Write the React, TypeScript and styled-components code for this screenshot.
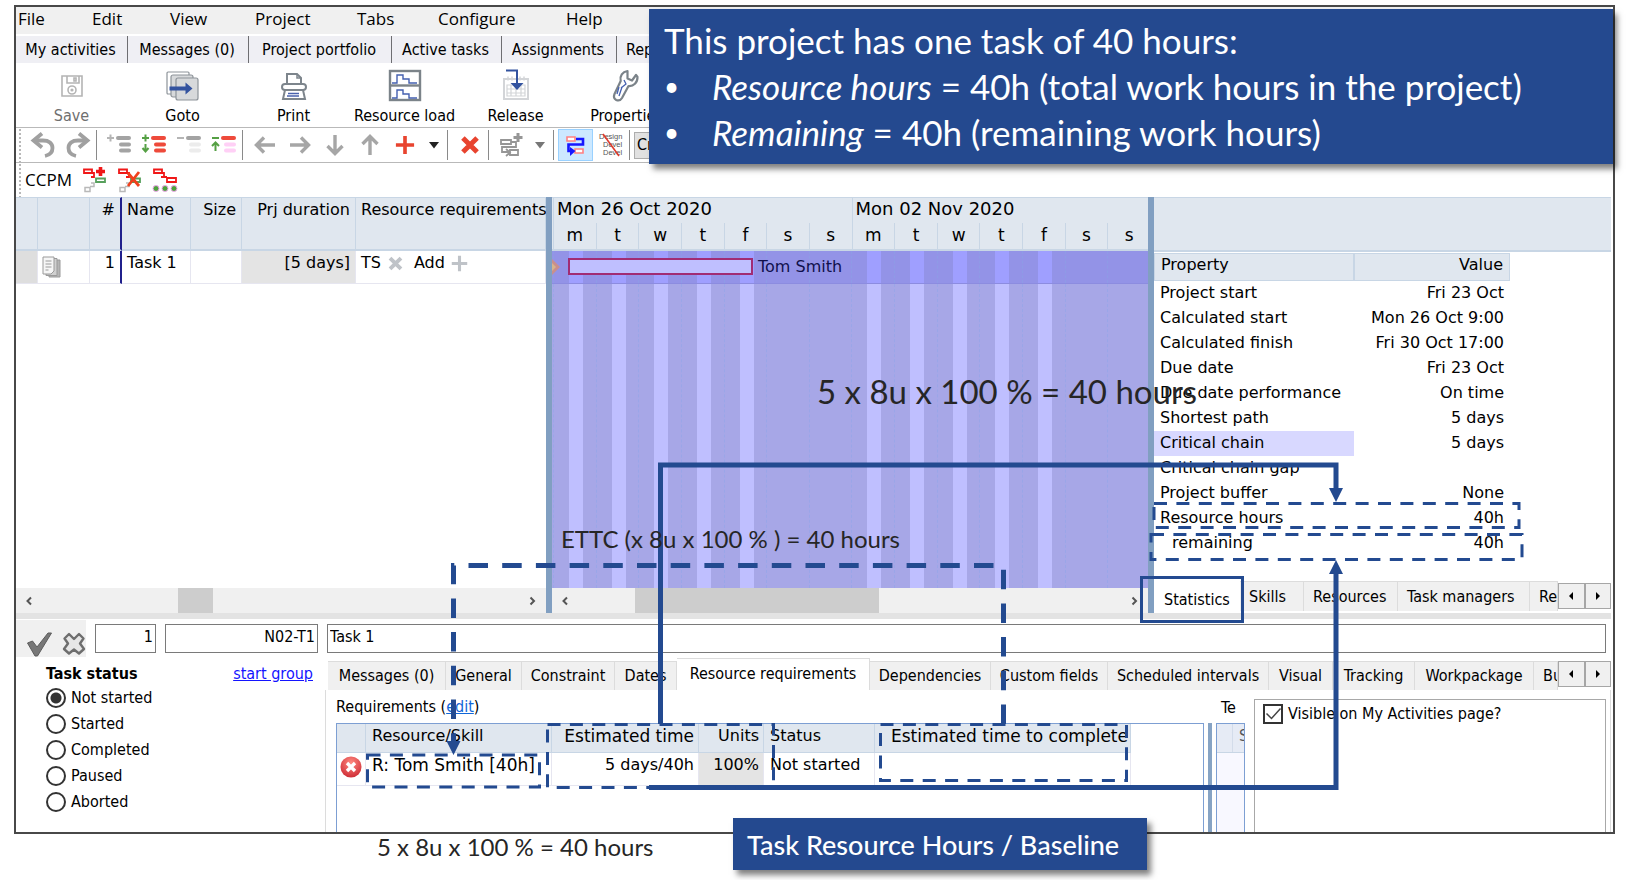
import React from "react";
import styled, { createGlobalStyle, css } from "styled-components";

const ui = `"DejaVu Sans Condensed", "Noto Sans", sans-serif`;
const wide = `"DejaVu Sans", sans-serif`;
const menuFont = `"Open Sans", "Noto Sans", sans-serif`;
const slide = `Lato, "Open Sans", sans-serif`;
const navy = "#234a90";
const headBg = "#e0e7ef";
const headLine = "#c8d6e5";

const Global = createGlobalStyle`
  *, *::before, *::after { box-sizing: border-box; }
  body { margin: 0; background: #fff; color: #000; font-family: ${ui}; font-size: 16px; line-height: 20px; }
  button, input, select { font: inherit; color: inherit; }
  button { padding: 0; border: 0; background: none; }
  table { border-collapse: separate; border-spacing: 0; table-layout: fixed; }
`;

const Stage = styled.div`
  position: relative;
  overflow: hidden;
  padding: 5px 37px 46px 14px;
`;

const Window = styled.main`
  border: 2px solid #484848;
  padding-right: 2px;
  overflow: hidden;
`;

const MenuBar = styled.nav`
  display: flex;
  height: 27px;
  background: #f0f0f0;
  font-family: ${menuFont};
  font-size: 17px;
`;
const MenuItem = styled.button<{ $w: number }>`
  flex: none;
  width: ${(p) => p.$w}px;
  padding: 0 0 4px 2px;
  text-align: left;
`;

const PageTabs = styled.nav`
  display: flex;
  height: 27px;
  margin-top: 2px;
  background: #efeff4;
`;
const PageTab = styled.button<{ $w: number }>`
  flex: none;
  width: ${(p) => p.$w}px;
  padding-right: 2px;
  border-right: 1px solid #6e6e72;
  white-space: nowrap;
`;

const Ribbon = styled.div`
  display: flex;
  height: 65px;
  border-bottom: 1px solid #b9b9b9;
`;
const RibbonButton = styled.button<{ $off?: boolean }>`
  flex: none;
  display: flex;
  flex-direction: column;
  align-items: center;
  width: 111px;
  padding-top: 4px;
  white-space: nowrap;
  color: ${(p) => (p.$off ? "#6f6f6f" : "#000")};
  svg { margin-bottom: 3px; }
`;

const Strip = styled.div`
  display: flex;
  align-items: center;
  height: 35px;
  border-bottom: 1px solid #b9b9b9;
`;
const CcpmStrip = styled(Strip)`
  height: 34px;
  border-bottom: 0;
`;
const Grip = styled.i`
  flex: none;
  width: 9px;
  height: 100%;
  background: radial-gradient(circle, #b8b8b8 1px, transparent 1px) 2px 0 / 4px 4px repeat-y;
`;
const Slot = styled.button<{ $w?: number; $on?: boolean }>`
  flex: none;
  display: grid;
  place-items: center;
  width: ${(p) => p.$w ?? 35}px;
  height: 32px;
  ${(p) => p.$on && css`background: #cce8ff; border: 1px solid #99d1ff;`}
`;
const Divider = styled.i`
  flex: none;
  width: 1px;
  height: 30px;
  margin: 0 4px 0 1px;
  background: #8a8a8a;
`;
const ModeSelect = styled.select`
  flex: none;
  width: 110px;
  height: 27px;
  appearance: none;
  border: 1px solid #adadad;
  border-radius: 0;
  padding: 0 2px;
  background: #e1e1e1;
`;
const CcpmLabel = styled.span`
  width: 52px;
  font-family: ${menuFont};
  font-size: 17px;
`;

const Panes = styled.section`
  display: flex;
  height: 416px;
`;
const Splitter = styled.i`
  flex: none;
  width: 6px;
  background: #819fc1;
`;
const Pane = styled.div<{ $w?: number }>`
  display: flex;
  flex-direction: column;
  overflow: hidden;
  ${(p) => (p.$w ? css`flex: none; width: ${p.$w}px;` : css`flex: 1; min-width: 0;`)}
`;
const Filler = styled.div`
  flex: 1;
`;

const TaskTable = styled.table`
  width: 530px;
  font-family: ${wide};
  th {
    height: 54px;
    padding: 2px 5px 0;
    vertical-align: top;
    font-weight: normal;
    white-space: nowrap;
    background: ${headBg};
    border: solid ${headLine};
    border-width: 1px 1px 2px 0;
  }
  td {
    height: 33px;
    padding: 0 5px 8px;
    white-space: nowrap;
    border: solid #e6e6f0;
    border-width: 0 1px 1px 0;
  }
  td svg { display: block; }
  td:nth-child(2) { padding: 0 4px; }
  th:nth-child(3), td:nth-child(3) { border-right: 2px solid #20208c; }
`;
const Th = styled.th<{ $r?: boolean; $large?: boolean }>`
  text-align: ${(p) => (p.$r ? "right" : "left")};
  font-size: ${(p) => (p.$large ? 17 : 16)}px;
`;
const Td = styled.td<{ $r?: boolean; $bg?: string; $large?: boolean }>`
  text-align: ${(p) => (p.$r ? "right" : "left")};
  background: ${(p) => p.$bg ?? "transparent"};
  font-size: ${(p) => (p.$large ? 17 : 16)}px;
`;
const Tags = styled.span`
  display: flex;
  align-items: center;
  gap: 6px;
  b { font-weight: normal; margin-left: 4px; }
`;

const ScrollBar = styled.div`
  display: flex;
  height: 25px;
  background: #f0f0f0;
`;
const ScrollArrow = styled.button`
  flex: none;
  display: grid;
  place-items: center;
  width: 26px;
`;
const Track = styled.div`
  flex: 1;
  display: flex;
`;
const Thumb = styled.i<{ $at: number; $w: number }>`
  width: ${(p) => p.$w}px;
  margin-left: ${(p) => p.$at}px;
  background: #cdcdcd;
`;

const Weeks = styled.div`
  display: flex;
  height: 54px;
  margin-right: -2px;
  padding-left: 1px;
  background: ${headBg};
  border: solid ${headLine};
  border-width: 1px 0 2px;
  font-family: ${wide};
`;
const Week = styled.div`
  flex: 1;
  border-left: 1px solid ${headLine};
`;
const WeekName = styled.div`
  height: 25px;
  padding: 1px 3px;
  font-size: 18px;
  white-space: nowrap;
`;
const DayNames = styled.div`
  display: flex;
  height: 26px;
  font-size: 17px;
`;
const DayName = styled.span`
  flex: 1;
  text-align: center;
  line-height: 24px;
  & + & { border-left: 1px solid ${headLine}; }
`;
const Stripes = styled.div<{ $hot?: boolean }>`
  position: relative;
  display: flex;
  flex: ${(p) => (p.$hot ? "none" : "1")};
  height: ${(p) => (p.$hot ? "33px" : "auto")};
  margin-right: -2px;
  padding-left: 1px;
  background: ${(p) => (p.$hot ? "#9393e7" : "#a7a7e7")};
  border-bottom: ${(p) => (p.$hot ? "1px solid #8c8ce0" : "0")};
`;
const Stripe = styled.i<{ $hot?: boolean; $off?: boolean }>`
  flex: 1;
  border-left: 1px dashed ${(p) => (p.$hot ? "#8e9be6" : "#9aa6e8")};
  ${(p) => {
    const dark = p.$hot ? "#9393e7" : "#a7a7e7";
    const light = p.$hot ? "#9f9fff" : "#bfbfff";
    return p.$off
      ? css`background: ${dark};`
      : css`background: linear-gradient(90deg, ${dark} 15px, ${light} 15px 29px, ${dark} 29px);`;
  }}
`;
const BarRow = styled.div`
  position: absolute;
  inset: 7px 0 auto 0;
  display: flex;
  align-items: center;
  height: 17px;
  color: #10104c;
  font-family: ${wide};
`;
const Bar = styled.i`
  width: 185px;
  height: 17px;
  margin: 0 5px 0 8px;
  border: 2px solid #a12c74;
  background: #bfbfff;
`;

const PropHead = styled.div`
  height: 55px;
  margin-bottom: 1px;
  background: ${headBg};
  border: solid ${headLine};
  border-width: 1px 0 2px;
`;
const PropTable = styled.table`
  width: 356px;
  font-family: ${wide};
  th {
    height: 28px;
    padding: 0 6px 5px;
    font-weight: normal;
    background: ${headBg};
    border: 1px solid ${headLine};
  }
  td { height: 25px; padding: 0 6px 2px; white-space: nowrap; }
`;
const SubItem = styled.span`
  padding-left: 12px;
`;

const TabRow = styled.div`
  flex: none;
  display: flex;
  align-items: flex-end;
  overflow: hidden;
`;
const StatTabs = styled(TabRow)`
  height: 32px;
  padding-bottom: 2px;
`;
const Tab = styled.button<{ $w: number; $on?: boolean }>`
  flex: none;
  width: ${(p) => p.$w}px;
  height: ${(p) => (p.$on ? 32 : 29)}px;
  padding-bottom: ${(p) => (p.$on ? 2 : 0)}px;
  overflow: hidden;
  white-space: nowrap;
  background: ${(p) => (p.$on ? "#fff" : "#f0f0f0")};
  border: solid #dcdcdc;
  border-width: 1px 1px 0 0;
`;
const StatTab = styled(Tab)`
  height: 30px;
  padding: ${(p) => (p.$on ? "6px 0 0 10px" : "0 0 0 9px")};
  text-align: left;
  border-color: ${(p) => (p.$on ? "#fff" : "#dcdcdc")};
`;
const CutTab = styled(Tab)`
  flex: 1 1 0;
  width: auto;
  min-width: 0;
  height: ${(p) => p.$w}px;
  padding-left: 9px;
  text-align: left;
`;
const Pager = styled.div`
  flex: none;
  align-self: center;
  display: flex;
  width: 53px;
  height: 26px;
  button {
    flex: 1;
    display: grid;
    place-items: center;
    background: #f0f0f0;
    border: 1px solid #a6a6a6;
  }
`;

const Sash = styled.div`
  height: 6px;
  background: #e3e3e3;
`;

const FieldRow = styled.div`
  display: flex;
  align-items: center;
  gap: 9px;
  height: 39px;
  padding-right: 5px;
`;
const Verdict = styled.div`
  flex: none;
  display: flex;
  align-items: flex-end;
  width: 70px;
  height: 37px;
  padding-left: 10px;
  gap: 10px;
  background: #f0f0f0;
  svg { display: block; }
`;
const Field = styled.input<{ $w?: number }>`
  height: 29px;
  min-width: 0;
  padding: 0 2px 4px;
  border: 1px solid #7a7a7a;
  background: #fff;
  ${(p) => (p.$w ? css`flex: none; width: ${p.$w}px; text-align: right;` : css`flex: 1;`)}
`;

const Details = styled.section`
  display: flex;
  height: 174px;
  overflow: hidden;
`;
const StatusBox = styled.fieldset`
  flex: none;
  width: 309px;
  margin: 0;
  padding: 6px 12px 0 30px;
  border: 0;
`;
const StatusHead = styled.div`
  display: flex;
  justify-content: space-between;
  margin-bottom: 1px;
  a { color: #1414ff; }
`;
const RadioLabel = styled.label`
  display: flex;
  align-items: center;
  gap: 5px;
  height: 26px;
`;
const Radio = styled.input`
  appearance: none;
  width: 20px;
  height: 20px;
  margin: 0;
  border: 2px solid #333;
  border-radius: 50%;
  background: #fff;
  &:checked { background: radial-gradient(circle, #333 5px, #fff 6px); }
`;

const Notebook = styled.div`
  flex: 1;
  min-width: 0;
  display: flex;
  flex-direction: column;
`;
const NoteTabs = styled(TabRow)`
  height: 32px;
  padding-left: 3px;
`;
const NotePage = styled.div`
  flex: 1;
  display: flex;
  border: solid #dcdcdc;
  border-width: 0 1px 0 1px;
  padding-right: 4px;
`;
const ReqArea = styled.div`
  flex: none;
  width: 882px;
  padding: 7px 0 0 10px;
  a { color: #0f66d8; }
`;
const ReqBox = styled.div`
  height: 120px;
  margin-top: 6px;
  width: 868px;
  border: 1px solid #7d9fd3;
`;
const ReqTable = styled.table`
  width: 794px;
  font-family: ${wide};
  th {
    height: 29px;
    padding: 0 4px 4px 6px;
    font-weight: normal;
    white-space: nowrap;
    background: ${headBg};
    border: solid ${headLine};
    border-width: 0 1px 1px 0;
  }
  td {
    height: 33px;
    padding: 0 4px 8px 6px;
    white-space: nowrap;
    border: solid #e6e6f0;
    border-width: 0 1px 1px 0;
  }
  td:first-child { padding: 0 0 4px; }
  td:first-child svg { display: block; margin: 0 auto; }
  th:last-child { padding: 0 2px 4px; }
`;
const SideArea = styled.div`
  flex: none;
  width: 42px;
  padding: 8px 0 0 4px;
  overflow: hidden;
`;
const SideTitle = styled.div`
  width: 26px;
  padding-left: 5px;
  overflow: hidden;
  white-space: nowrap;
`;
const SideBox = styled.div`
  width: 29px;
  height: 120px;
  margin-top: 5px;
  overflow: hidden;
  border: 1px solid #7d9fd3;
  background: #f8f8ff;
`;
const SideHead = styled.div`
  height: 29px;
  padding-left: 22px;
  line-height: 24px;
  color: #555;
  background: linear-gradient(90deg, #e6ebf5 15px, #d3dcea 15px 16px, #e6ebf5 16px);
  border-bottom: 1px solid ${headLine};
`;
const SideSash = styled.i`
  flex: none;
  width: 4px;
  margin: 33px 0 0;
  background: #86a3c4;
`;
const VisibleBox = styled.div`
  flex: 1;
  margin-top: 9px;
  padding: 4px 8px;
  border: solid #a8a8a8;
  border-width: 1px 1px 0 1px;
`;
const CheckLabel = styled.label`
  display: flex;
  align-items: center;
  gap: 5px;
`;
const Check = styled.input`
  appearance: none;
  width: 20px;
  height: 20px;
  margin: 0;
  border: 2px solid #333;
  background: #fff;
`;
const CheckWrap = styled.span`
  display: grid;
  > * { grid-area: 1 / 1; }
`;

const Callout = styled.aside`
  position: absolute;
  background: #24498f;
  color: #fff;
  font-family: ${slide};
  box-shadow: 4px 5px 6px rgba(0, 0, 0, 0.5);
`;
const TopCallout = styled(Callout)`
  left: 649px;
  right: 39px;
  top: 9px;
  height: 155px;
  padding: 8px 15px;
  font-size: 35px;
  line-height: 46px;
  white-space: nowrap;
  p { margin: 0; }
  ul { margin: 0; padding: 0; list-style: none; }
  li { display: flex; }
  li::before { content: "•"; width: 48px; font-size: 26px; }
`;
const TitleCallout = styled(Callout)`
  left: 733px;
  top: 818px;
  width: 414px;
  height: 52px;
  padding-left: 14px;
  font-size: 27px;
  line-height: 54px;
  font-weight: 500;
  white-space: nowrap;
`;
const Note = styled.p<{ $x: number; $y: number; $big?: boolean }>`
  position: absolute;
  left: ${(p) => p.$x}px;
  top: ${(p) => p.$y}px;
  margin: 0;
  color: #262626;
  font-family: ${slide};
  font-size: ${(p) => (p.$big ? 33 : 24)}px;
  line-height: 32px;
  white-space: nowrap;
`;
const Links = styled.svg`
  position: absolute;
  left: 0;
  top: 0;
  overflow: visible;
  pointer-events: none;
`;

/* ---------- icons ---------- */

const SaveIcon = () => (
  <svg width="34" height="36" viewBox="0 0 34 36" fill="none" stroke="#b4b4b4" strokeWidth="1.6">
    <path d="M7 9h20v20H7z" /><path d="M12 9v7h12V9M19 11v3h2v-3z" /><circle cx="17" cy="23" r="4" /><circle cx="17" cy="23" r=".8" />
  </svg>
);
const GotoIcon = () => (
  <svg width="34" height="36" viewBox="0 0 34 36" stroke="#8d9399" strokeWidth="1.2">
    <rect x="1" y="5" width="22" height="22" rx="1" fill="#fff" />
    <rect x="5" y="8" width="22" height="22" rx="2" fill="#d7d9db" />
    <rect x="10" y="11" width="22" height="22" rx="2" fill="#d7d9db" />
    <path d="M3.500 19.500h16v-4l7 6-7 6v-4h-16z" fill="#33539f" stroke="none" />
  </svg>
);
const PrintIcon = () => (
  <svg width="34" height="36" viewBox="0 0 34 36" fill="#fff" stroke="#7d858c" strokeWidth="2">
    <path d="M10 17V7h10l4 4v6" /><path d="M20 7v4h4" fill="none" strokeWidth="1.500" />
    <rect x="5" y="17" width="24" height="6" rx="3" /><path d="M8 23h18l2 9H6z" />
    <path d="M11 26.500h11M10 29h12" stroke="#4a62ad" strokeWidth="1.500" />
  </svg>
);
const LoadIcon = () => (
  <svg width="34" height="36" viewBox="0 0 34 36" fill="none" stroke="#7b8389" strokeWidth="2.400">
    <rect x="2" y="4" width="30" height="29" fill="#fff" /><path d="M2 18.500h30" />
    <path d="M4 16h5V8h6v4h6v4h8M4 31h5v-8h6v4h6v4h8" stroke="#4460b0" strokeWidth="1.400" />
  </svg>
);
const ReleaseIcon = () => (
  <svg width="34" height="36" viewBox="0 0 34 36" fill="none" stroke="#d3d5d8" strokeWidth="2">
    <rect x="5" y="12" width="24" height="20" />
    <path d="M9 9.500v4M25 9.500v4M13 9.500v4M21 9.500v4" strokeWidth="1.500" />
    <path d="M8 18h18v11H8zM8 22h18M8 26h18M12 18v11M17 18v11M22 18v11" strokeWidth="1.200" />
    <path d="M7 3.500h11V17" stroke="#33539f" strokeWidth="2" /><path d="M11.500 16h13L18 23z" fill="#33539f" stroke="none" />
  </svg>
);
const WrenchIcon = () => (
  <svg width="34" height="36" viewBox="0 0 34 36" fill="#fff" stroke="#7b8389" strokeWidth="2.200" strokeLinejoin="round">
    <path d="M17.500 4c-5 .8-8 5-6.800 10L4.500 27c-1 2.500-.5 4.800 1.700 6 2.300 1 4.500.2 5.800-2l6.500-12c5 .5 9.200-3.500 9-9l-1.500-2-4 5.500-4.500-2z" />
    <path d="M14 13l2 4-5 4M12 20l-3 9M9 20l-2 7" stroke="#4460b0" strokeWidth="1.300" fill="none" />
  </svg>
);

const Undo = ({ flip }: { flip?: boolean }) => (
  <svg width="26" height="26" viewBox="0 0 26 26" fill="none" stroke="#a0a0a0" strokeWidth="3.800">
    <g transform={flip ? "translate(26 0) scale(-1 1)" : undefined}>
      <path d="M12 1.500L3.500 8.500 12 15.500" /><path d="M4 8.500h9c6 0 9.500 3 9.500 7.500 0 4-3 7-7.500 8" />
    </g>
  </svg>
);
const Outline = ({ kind }: { kind: "add" | "expand" | "minus" | "collapse" }) => {
  const red = kind === "expand" || kind === "collapse";
  const top = red ? "#ee4a3b" : "#a3a3a3";
  const rest = kind === "add" ? "#a3a3a3" : kind === "expand" ? "#ee4a3b" : kind === "minus" ? "#ececec" : "#ffd0f6";
  const mark = red ? "#55a044" : "#b5b5b5";
  return (
    <svg width="26" height="26" viewBox="0 0 26 26">
      <g strokeWidth="4" strokeLinecap="round">
        <path d="M12 6h11" stroke={top} />
        <path d="M15 12.500h8M15 18.500h8" stroke={rest} />
      </g>
      <g stroke={mark} strokeWidth="2" fill="none">
        <path d="M1 6h7" />
        {(kind === "add" || kind === "expand") && <path d="M4.500 2.500v7" />}
        {kind === "expand" && <path d="M4.500 12v7M1.500 16l3 3.500 3-3.500" />}
        {kind === "collapse" && <path d="M4.500 19v-8M1 14l3.500-3.500L8 14" />}
      </g>
    </svg>
  );
};
const Arrow = ({ turn }: { turn: number }) => (
  <svg width="24" height="24" viewBox="0 0 24 24" fill="none" stroke="#a6a6a6" strokeWidth="3.400">
    <g transform={`rotate(${turn} 12 12)`}><path d="M22 12H4M11 4.500L3.500 12l7.500 7.500" /></g>
  </svg>
);
const Cross = ({ turn = 0, size = 22, color = "#e8442f", weight = 4 }: { turn?: number; size?: number; color?: string; weight?: number }) => (
  <svg width={size} height={size} viewBox="0 0 22 22" stroke={color} strokeWidth={weight}>
    <g transform={`rotate(${turn} 11 11)`}><path d="M11 1v20M1 11h20" /></g>
  </svg>
);
const Caret = ({ color }: { color: string }) => (
  <svg width="12" height="8" viewBox="0 0 12 8"><path d="M1 1h10L6 7.500z" fill={color} /></svg>
);
const NetIcon = () => (
  <svg width="26" height="26" viewBox="0 0 26 26" fill="none" stroke="#969696" strokeWidth="1.800">
    <path d="M3 8h10v4H3zM12 18h8v5h-8zM13 10h5v5H4v5h7M8 17l4 3.500L8 24" /><path d="M20 1v9M15.500 5.500h9" strokeWidth="3" />
  </svg>
);
const LinkIcon = () => (
  <svg width="24" height="24" viewBox="0 0 24 24" fill="none">
    <path d="M3 4h8v4H3zM11 16h8v4h-8z" fill="#fff" stroke="#ff8080" strokeWidth="1.600" />
    <path d="M12 6h7v5.500H4.500V18H9" stroke="#1616ff" strokeWidth="2.600" /><path d="M6 14l5.500 4L6 23z" fill="#1616ff" />
  </svg>
);
const DesignIcon = () => (
  <svg width="26" height="26" viewBox="0 0 26 26" fill="#555" fontFamily="Liberation Sans, sans-serif" fontSize="7.500">
    <text x="1" y="7">Design</text><text x="5" y="15">Devel</text><text x="5" y="23">Devel</text>
    <path d="M5 2l16 22" stroke="#e03a2c" strokeWidth="1.600" />
  </svg>
);
const Ccpm = ({ kind }: { kind: "add" | "cut" | "dots" }) => (
  <svg width="26" height="26" viewBox="0 0 26 26" fill="none" strokeWidth="1.800">
    <path d="M2 2.500h8v3.500H2zM8 6h4v4H9" stroke="#f01818" />
    {kind === "dots" ? (
      <>
        <path d="M12 10h3M15 11h9v4h-9z" stroke="#f01818" />
        <g fill="#4da43c" stroke="#f0a6ee" strokeWidth="1"><circle cx="4" cy="21.500" r="3" /><circle cx="13" cy="21.500" r="3" /><circle cx="22" cy="21.500" r="3" /></g>
      </>
    ) : (
      <>
        <path d="M14 11.500h9v3.500h-9z" stroke="#57a05c" />
        <path d="M3 20.500h5v4H3zM9 16h3v3.500H8" stroke="#b9b9b9" strokeWidth="1.500" />
        {kind === "add" ? <path d="M18.500 0v9M14 4.500h9" stroke="#f01818" strokeWidth="3.600" />
          : <path d="M11 19L22 5M11 6l11 13" stroke="#f0401c" strokeWidth="2.800" />}
      </>
    )}
  </svg>
);
const PagesIcon = () => (
  <svg width="20" height="22" viewBox="0 0 20 22" stroke="#9a9a9a" strokeWidth="1">
    <path d="M7 4h11v17H7z" fill="#b5b5b5" /><path d="M4 2.500h11v17H4z" fill="#d0d0d0" />
    <path d="M1 1h11v14l-3 3H1z" fill="#f6f6f6" /><path d="M3.500 5h6M3.500 8h6M3.500 11h6M3.500 14h3" />
  </svg>
);
const Chevron = ({ right }: { right?: boolean }) => (
  <svg width="8" height="10" viewBox="0 0 8 10" fill="none" stroke="#555" strokeWidth="2">
    <path d={right ? "M1.500 1.500L5 5 1.500 8.500" : "M6 1.500L2.500 5 6 8.500"} />
  </svg>
);
const Tri = ({ right }: { right?: boolean }) => (
  <svg width="6" height="8" viewBox="0 0 6 8"><path d={right ? "M1 0l4 4-4 4z" : "M5 0L1 4l4 4z"} /></svg>
);
const TickIcon = () => (
  <svg width="26" height="26" viewBox="0 0 26 26">
    <path d="M1.500 12l5-2 4.500 6L22 2h3.500L11.500 25H9z" fill="#777" stroke="#5c5c5c" strokeWidth="1" strokeLinejoin="round" />
  </svg>
);
const CancelIcon = () => (
  <svg width="24" height="26" viewBox="0 0 24 26" fill="#e6e6e6" stroke="#6e6e6e" strokeWidth="2.400" strokeLinejoin="round">
    <path d="M7 3l5 5 5-5 4.500 4.500L18 12.500l4 5.500-5 4.500-5-4-5 4L2 18l4-5.500-3.500-5z" />
  </svg>
);
const ErrorIcon = () => (
  <svg width="22" height="22" viewBox="0 0 22 22">
    <defs><radialGradient id="err" cx=".5" cy=".3" r=".8"><stop offset="0" stopColor="#ff8a80" /><stop offset="1" stopColor="#c8202c" /></radialGradient></defs>
    <circle cx="11" cy="11" r="10.500" fill="url(#err)" /><path d="M7 7l8 8M15 7l-8 8" stroke="#fff" strokeWidth="3.400" />
  </svg>
);

/* ---------- data ---------- */

const menus: [string, number][] = [["File", 74], ["Edit", 78], ["View", 85], ["Project", 102], ["Tabs", 81], ["Configure", 128], ["Help", 80]];
const pageTabs: [string, number][] = [["My activities", 112], ["Messages (0)", 121], ["Project portfolio", 143], ["Active tasks", 110], ["Assignments", 115], ["Reports", 76]];
const properties: [string, string][] = [
  ["Project start", "Fri 23 Oct"], ["Calculated start", "Mon 26 Oct 9:00"], ["Calculated finish", "Fri 30 Oct 17:00"],
  ["Due date", "Fri 23 Oct"], ["Due date performance", "On time"], ["Shortest path", "5 days"], ["Critical chain", "5 days"],
  ["Critical chain gap", ""], ["Project buffer", "None"], ["Resource hours", "40h"], ["remaining", "40h"],
];
const noteTabs: [string, number][] = [
  ["Messages (0)", 118], ["General", 76], ["Constraint", 93], ["Dates", 62], ["Resource requirements", 193], ["Dependencies", 121],
  ["Custom fields", 117], ["Scheduled intervals", 161], ["Visual", 64], ["Tracking", 82], ["Workpackage", 119],
];
const statuses = ["Not started", "Started", "Completed", "Paused", "Aborted"];
const week = ["m", "t", "w", "t", "f", "s", "s"];
const days = [...week, ...week];

const Scroller = ({ at, w }: { at: number; w: number }) => (
  <ScrollBar>
    <ScrollArrow aria-label="Scroll left"><Chevron /></ScrollArrow>
    <Track><Thumb $at={at} $w={w} /></Track>
    <ScrollArrow aria-label="Scroll right"><Chevron right /></ScrollArrow>
  </ScrollBar>
);
const TabPager = () => (
  <Pager>
    <button aria-label="Previous tabs"><Tri /></button>
    <button aria-label="Next tabs"><Tri right /></button>
  </Pager>
);

const Toolbars = () => (
  <>
    <MenuBar>{menus.map(([t, w]) => <MenuItem key={t} $w={w}>{t}</MenuItem>)}</MenuBar>
    <PageTabs>{pageTabs.map(([t, w]) => <PageTab key={t} $w={w}>{t}</PageTab>)}</PageTabs>
    <Ribbon>
      <RibbonButton $off><SaveIcon />Save</RibbonButton>
      <RibbonButton><GotoIcon />Goto</RibbonButton>
      <RibbonButton><PrintIcon />Print</RibbonButton>
      <RibbonButton><LoadIcon />Resource load</RibbonButton>
      <RibbonButton><ReleaseIcon />Release</RibbonButton>
      <RibbonButton><WrenchIcon />Properties</RibbonButton>
    </Ribbon>
    <Strip>
      <Grip />
      <Slot aria-label="Undo"><Undo /></Slot>
      <Slot aria-label="Redo"><Undo flip /></Slot>
      <Divider />
      <Slot aria-label="Add level"><Outline kind="add" /></Slot>
      <Slot aria-label="Expand all"><Outline kind="expand" /></Slot>
      <Slot aria-label="Remove level"><Outline kind="minus" /></Slot>
      <Slot aria-label="Collapse all"><Outline kind="collapse" /></Slot>
      <Divider />
      <Slot aria-label="Outdent"><Arrow turn={0} /></Slot>
      <Slot aria-label="Indent"><Arrow turn={180} /></Slot>
      <Slot aria-label="Move down"><Arrow turn={270} /></Slot>
      <Slot aria-label="Move up"><Arrow turn={90} /></Slot>
      <Slot aria-label="Add"><Cross size={20} /></Slot>
      <Slot $w={24} aria-label="Add options"><Caret color="#222" /></Slot>
      <Divider />
      <Slot aria-label="Delete"><Cross turn={45} weight={5} /></Slot>
      <Divider />
      <Slot aria-label="Add network"><NetIcon /></Slot>
      <Slot $w={24} aria-label="Network options"><Caret color="#777" /></Slot>
      <Divider />
      <Slot $on aria-label="Show links"><LinkIcon /></Slot>
      <Slot aria-label="Hide names"><DesignIcon /></Slot>
      <Divider />
      <ModeSelect aria-label="Mode"><option>Critical</option></ModeSelect>
    </Strip>
    <CcpmStrip>
      <Grip />
      <CcpmLabel>CCPM</CcpmLabel>
      <Slot aria-label="Add chain"><Ccpm kind="add" /></Slot>
      <Slot aria-label="Remove chain"><Ccpm kind="cut" /></Slot>
      <Slot aria-label="Chain options"><Ccpm kind="dots" /></Slot>
    </CcpmStrip>
  </>
);

const TaskPane = () => (
  <Pane $w={530}>
    <TaskTable>
      <colgroup><col width={22} /><col width={52} /><col width={32} /><col width={69} /><col width={51} /><col width={114} /><col width={190} /></colgroup>
      <thead>
        <tr><Th /><Th /><Th $r>#</Th><Th>Name</Th><Th $r>Size</Th><Th $r>Prj duration</Th><Th>Resource requirements</Th></tr>
      </thead>
      <tbody>
        <tr>
          <Td $bg="#dedede" /><Td><PagesIcon /></Td><Td $r>1</Td><Td>Task 1</Td><Td /><Td $r $bg="#e4e4e4">[5 days]</Td>
          <Td><Tags>TS <Cross turn={45} size={17} color="#bfc3c8" weight={5} /><b>Add</b> <Cross size={17} color="#bfc3c8" weight={4} /></Tags></Td>
        </tr>
      </tbody>
    </TaskTable>
    <Filler />
    <Scroller at={136} w={35} />
  </Pane>
);

const GanttPane = () => (
  <Pane $w={596}>
    <Weeks>
      {["Mon 26 Oct 2020", "Mon 02 Nov 2020"].map((name) => (
        <Week key={name}>
          <WeekName>{name}</WeekName>
          <DayNames>{week.map((d, i) => <DayName key={i}>{d}</DayName>)}</DayNames>
        </Week>
      ))}
    </Weeks>
    <Stripes $hot>
      {days.map((d, i) => <Stripe key={i} $hot $off={d === "s"} />)}
      <BarRow>
        <svg width="8" height="16" viewBox="0 0 8 16"><path d="M0 0l8 8-8 8z" fill="#c98f8c" /><path d="M0 4l4 4-4 4z" fill="#d8b48c" /></svg>
        <Bar />Tom Smith
      </BarRow>
    </Stripes>
    <Stripes>{days.map((d, i) => <Stripe key={i} $off={d === "s"} />)}</Stripes>
    <Scroller at={57} w={244} />
  </Pane>
);

const PropertyPane = () => (
  <Pane>
    <PropHead />
    <PropTable>
      <colgroup><col width={200} /><col width={156} /></colgroup>
      <thead><tr><Th>Property</Th><Th $r>Value</Th></tr></thead>
      <tbody>
        {properties.map(([k, v]) => (
          <tr key={k}>
            <Td $bg={k === "Critical chain" ? "#d8d8ff" : undefined}>{k === "remaining" ? <SubItem>{k}</SubItem> : k}</Td>
            <Td $r>{v}</Td>
          </tr>
        ))}
      </tbody>
    </PropTable>
    <Filler />
    <StatTabs>
      <StatTab $w={86} $on>Statistics</StatTab>
      <StatTab $w={64}>Skills</StatTab>
      <StatTab $w={94}>Resources</StatTab>
      <StatTab $w={132}>Task managers</StatTab>
      <CutTab $w={30}>Reports</CutTab>
      <TabPager />
    </StatTabs>
  </Pane>
);

const TaskDetails = () => (
  <Details>
    <StatusBox>
      <StatusHead><b>Task status</b><a href="#start-group">start group</a></StatusHead>
      {statuses.map((s, i) => (
        <RadioLabel key={s}><Radio type="radio" name="status" defaultChecked={i === 0} />{s}</RadioLabel>
      ))}
    </StatusBox>
    <Notebook>
      <NoteTabs>
        {noteTabs.map(([t, w]) => <Tab key={t} $w={w} $on={t === "Resource requirements"}>{t}</Tab>)}
        <CutTab $w={29}>Budget</CutTab>
        <TabPager />
      </NoteTabs>
      <NotePage>
        <ReqArea>
          Requirements (<a href="#edit">edit</a>)
          <ReqBox>
            <ReqTable>
              <colgroup><col width={29} /><col width={186} /><col width={147} /><col width={65} /><col width={111} /><col width={256} /></colgroup>
              <thead>
                <tr><Th /><Th>Resource/Skill</Th><Th $r $large>Estimated time</Th><Th $r>Units</Th><Th>Status</Th><Th $r $large>Estimated time to complete</Th></tr>
              </thead>
              <tbody>
                <tr><Td><ErrorIcon /></Td><Td $large>R: Tom Smith [40h]</Td><Td $r>5 days/40h</Td><Td $r $bg="#e4e4e4">100%</Td><Td>Not started</Td><Td /></tr>
              </tbody>
            </ReqTable>
          </ReqBox>
        </ReqArea>
        <SideSash />
        <SideArea>
          <SideTitle>Te</SideTitle>
          <SideBox><SideHead>S</SideHead></SideBox>
        </SideArea>
        <VisibleBox>
          <CheckLabel>
            <CheckWrap>
              <Check type="checkbox" defaultChecked />
              <svg width="20" height="20" viewBox="0 0 20 20" fill="none" stroke="#444" strokeWidth="1.500"><path d="M3.500 9.500l5 5 9-10" /></svg>
            </CheckWrap>
            Visible on My Activities page?
          </CheckLabel>
        </VisibleBox>
      </NotePage>
    </Notebook>
  </Details>
);

const Annotations = () => (
  <>
    <Links width="1600" height="870" fill="none" stroke={navy} strokeWidth="5">
      <path d="M660.500 724V465H1336V490" />
      <path d="M649 787.500H1336V572" />
      <path d="M1003.500 724V565.500H453.500V744" strokeDasharray="19.500 14.200" />
      <g fill={navy} stroke="none">
        <path d="M1329 488h14l-7 14zM1329 574h14l-7-14zM446.500 741h14l-7 14z" />
      </g>
      <g strokeWidth="3" strokeDasharray="13 9.400">
        <rect x="1154" y="503.500" width="365" height="24" />
        <rect x="1151" y="534.500" width="371" height="25" />
        <rect x="367.500" y="755" width="172" height="32" />
        <rect x="547.500" y="724.500" width="226" height="63" />
        <rect x="880.500" y="724.500" width="246" height="56" />
      </g>
      <rect x="1141.500" y="577.500" width="101" height="44" strokeWidth="3" />
    </Links>
    <Note $x={817} $y={375} $big>5 x 8u x 100 % = 40 hours</Note>
    <Note $x={561} $y={523}>ETTC (x 8u x 100 % ) = 40 hours</Note>
    <Note $x={377} $y={831}>5 x 8u x 100 % = 40 hours</Note>
    <TopCallout>
      <p>This project has one task of 40 hours:</p>
      <ul>
        <li><span><em>Resource hours</em> = 40h (total work hours in the project)</span></li>
        <li><span><em>Remaining</em> = 40h (remaining work hours)</span></li>
      </ul>
    </TopCallout>
    <TitleCallout>Task Resource Hours / Baseline</TitleCallout>
  </>
);

export default function App() {
  return (
    <Stage>
      <Global />
      <Window>
        <Toolbars />
        <Panes>
          <TaskPane />
          <Splitter />
          <GanttPane />
          <Splitter />
          <PropertyPane />
        </Panes>
        <Sash />
        <FieldRow>
          <Verdict>
            <button aria-label="Accept"><TickIcon /></button>
            <button aria-label="Cancel"><CancelIcon /></button>
          </Verdict>
          <Field $w={61} defaultValue="1" aria-label="Task number" />
          <Field $w={153} defaultValue="N02-T1" aria-label="Task code" />
          <Field defaultValue="Task 1" aria-label="Task name" />
        </FieldRow>
        <TaskDetails />
      </Window>
      <Annotations />
    </Stage>
  );
}
